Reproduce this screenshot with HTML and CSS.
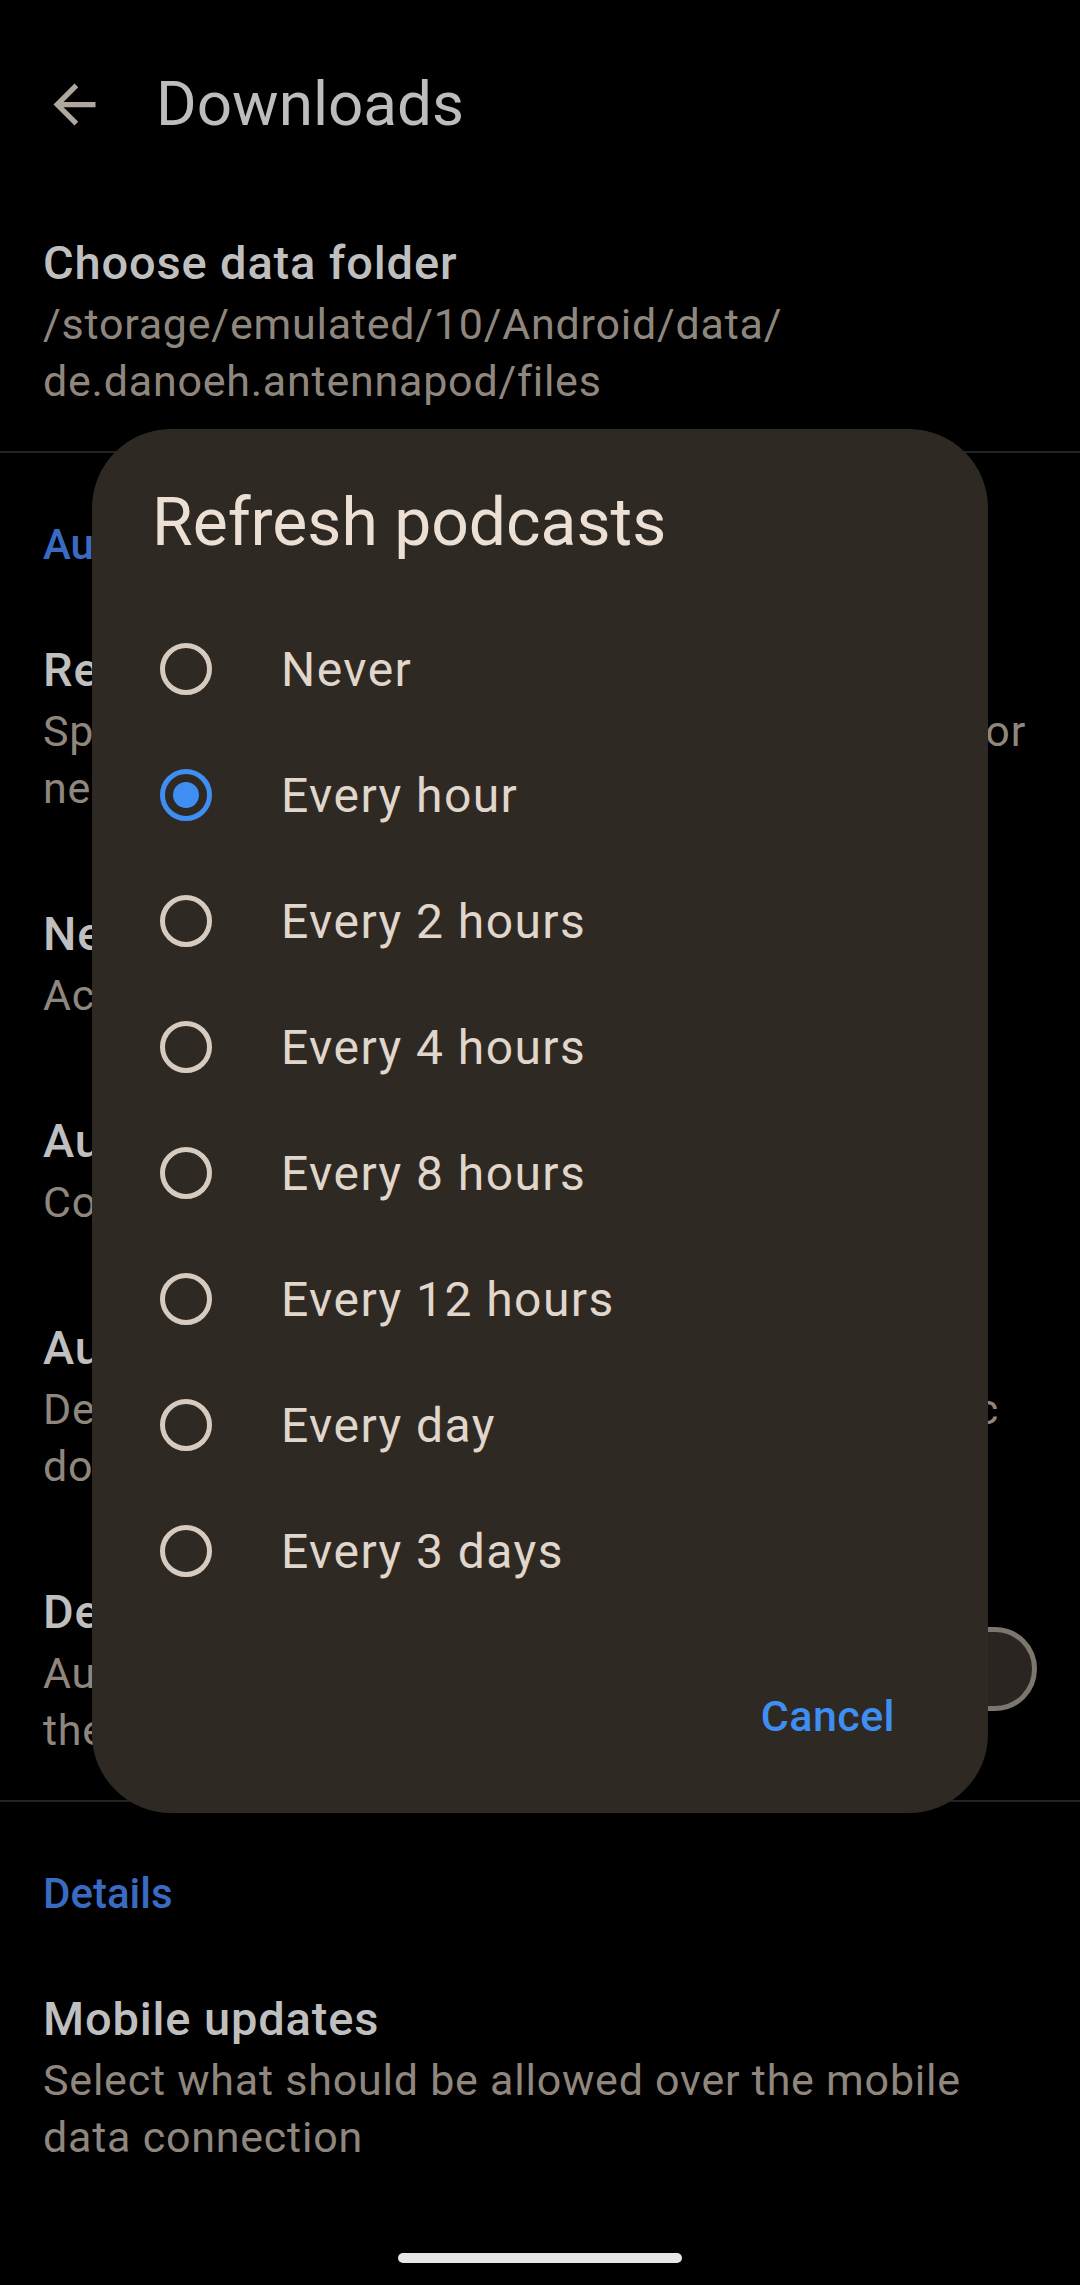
FILE: index.html
```html
<!DOCTYPE html>
<html lang="en">
<head>
  <meta charset="UTF-8" />
  <meta name="viewport" content="width=device-width, initial-scale=1.0"/>
  <title>Downloads</title>
  <link rel="stylesheet" href="styles.css">
</head>
<body>
  <div class="screen">
    <header class="toolbar">
      <svg class="back" viewBox="0 -960 960 960"><path d="M313-440l224 224-57 56-320-320 320-320 57 56-224 224h487v80H313Z"/></svg>
      <h1>Downloads</h1>
    </header>

    <div class="prefs">
      <div class="pref">
        <div class="pref-text">
          <div class="pref-title">Choose data folder</div>
          <div class="pref-summary nowrap">/storage/emulated/10/Android/data/<br>de.danoeh.antennapod/files</div>
        </div>
      </div>
      <div class="divider"></div>

      <div class="category">Automation</div>
      <div class="pref">
        <div class="pref-text">
          <div class="pref-title">Refresh podcasts</div>
          <div class="pref-summary nowrap">Specify an interval or a specific time to search for<br>new episodes automatically</div>
        </div>
      </div>
      <div class="pref">
        <div class="pref-text">
          <div class="pref-title">New episodes action</div>
          <div class="pref-summary">Action to take for new episodes</div>
        </div>
      </div>
      <div class="pref">
        <div class="pref-text">
          <div class="pref-title">Automatic download</div>
          <div class="pref-summary">Configure the automatic download of episodes</div>
        </div>
      </div>
      <div class="pref">
        <div class="pref-text">
          <div class="pref-title">Auto delete</div>
          <div class="pref-summary nowrap">Delete episodes after playing or when automatic<br>downloads need space</div>
        </div>
      </div>
      <div class="pref">
        <div class="pref-text">
          <div class="pref-title">Delete removes from queue</div>
          <div class="pref-summary nowrap">Automatically remove an episode from<br>the queue when it is deleted</div>
        </div>
        <div class="switch"><span class="thumb"></span></div>
      </div>
      <div class="divider"></div>

      <div class="category">Details</div>
      <div class="pref">
        <div class="pref-text">
          <div class="pref-title">Mobile updates</div>
          <div class="pref-summary">Select what should be allowed over the mobile data connection</div>
        </div>
      </div>
    </div>

    <div class="home-bar"></div>

    <!-- Refresh interval dialog -->
    <div class="scrim">
      <div class="dialog">
        <h2 class="dialog-title">Refresh podcasts</h2>
        <div class="options">
          <div class="option"><span class="radio"></span>Never</div>
          <div class="option"><span class="radio checked"></span>Every hour</div>
          <div class="option"><span class="radio"></span>Every 2 hours</div>
          <div class="option"><span class="radio"></span>Every 4 hours</div>
          <div class="option"><span class="radio"></span>Every 8 hours</div>
          <div class="option"><span class="radio"></span>Every 12 hours</div>
          <div class="option"><span class="radio"></span>Every day</div>
          <div class="option"><span class="radio"></span>Every 3 days</div>
        </div>
        <div class="actions">
          <button class="btn" type="button">Cancel</button>
        </div>
      </div>
    </div>
  </div>
</body>
</html>
```

FILE: styles.css
```css
* {
  box-sizing: border-box;
}

body {
  margin: 0;
  background-color: #000;
  font-family: Roboto, 'Noto Sans', sans-serif;
}

.screen {
  position: relative;
  width: 1080px;
  height: 2285px;
  overflow: hidden;
  background-color: #000;
}

.toolbar {
  display: flex;
  align-items: center;
  height: 124px;
  margin-top: 42px;
  padding-left: 43px;
}

.back {
  width: 63px;
  height: 63px;
  fill: #b0a89f;
}

.toolbar h1 {
  margin: 0 0 0 50px;
  font-size: 62px;
  font-weight: 400;
  line-height: 124px;
  color: #bdbdbd;
}

.prefs {
  padding-top: 21px;
}

.pref {
  display: flex;
  align-items: center;
  padding: 42px 43px 41px;
}

.pref-text {
  flex: 1;
  min-width: 0;
}

.pref-title {
  font-size: 47px;
  font-weight: 500;
  line-height: 67px;
  letter-spacing: 0.018em;
  color: #bfbfbf;
}

.pref-summary {
  font-size: 43px;
  line-height: 57px;
  letter-spacing: 0.018em;
  color: #8f877e;
}

.nowrap {
  white-space: nowrap;
}

.divider {
  height: 2px;
  background-color: #232323;
}

.category {
  padding: 67px 43px 24px;
  font-size: 42px;
  font-weight: 500;
  line-height: 50px;
  color: #3a6bc2;
}

.switch {
  display: flex;
  align-items: center;
  width: 136px;
  height: 84px;
  padding-left: 14px;
  border: 5px solid #7d766e;
  border-radius: 42px;
  background-color: #2a2520;
  flex-shrink: 0;
}

.thumb {
  width: 42px;
  height: 42px;
  border-radius: 50%;
  background-color: #7d766e;
}

.home-bar {
  width: 284px;
  height: 10px;
  margin: 46px auto 0;
  border-radius: 5px;
  background-color: #e6e6e6;
}

/* dialog sits over the settings list */
.scrim {
  position: absolute;
  top: 0;
  left: 0;
  right: 0;
  bottom: 0;
  display: flex;
  justify-content: center;
  align-items: flex-start;
  padding-top: 429px;
}

.dialog {
  width: 896px;
  padding: 52px 0 63px;
  border-radius: 79px;
  background-color: #2f2923;
}

.dialog-title {
  margin: 0;
  padding: 0 60px;
  font-size: 66px;
  font-weight: 400;
  line-height: 84px;
  color: #ece0d4;
}

.options {
  margin-top: 41px;
}

.option {
  display: flex;
  align-items: center;
  height: 126px;
  padding-left: 68px;
  font-size: 48px;
  letter-spacing: 0.03em;
  color: #e0d6cb;
}

.radio {
  display: flex;
  align-items: center;
  justify-content: center;
  width: 52px;
  height: 52px;
  margin-right: 69px;
  border: 5px solid #d6cbbe;
  border-radius: 50%;
  flex-shrink: 0;
}

.radio.checked {
  border-color: #3f8ef2;
}

.radio.checked::after {
  content: "";
  width: 26px;
  height: 26px;
  border-radius: 50%;
  background-color: #3f8ef2;
}

.actions {
  display: flex;
  justify-content: flex-end;
  margin-top: 68px;
  padding-right: 62px;
}

.btn {
  height: 68px;
  padding: 0 31px;
  border: none;
  background: none;
  font-family: inherit;
  font-size: 43px;
  font-weight: 500;
  letter-spacing: 0.01em;
  color: #3f8ef2;
}
```
